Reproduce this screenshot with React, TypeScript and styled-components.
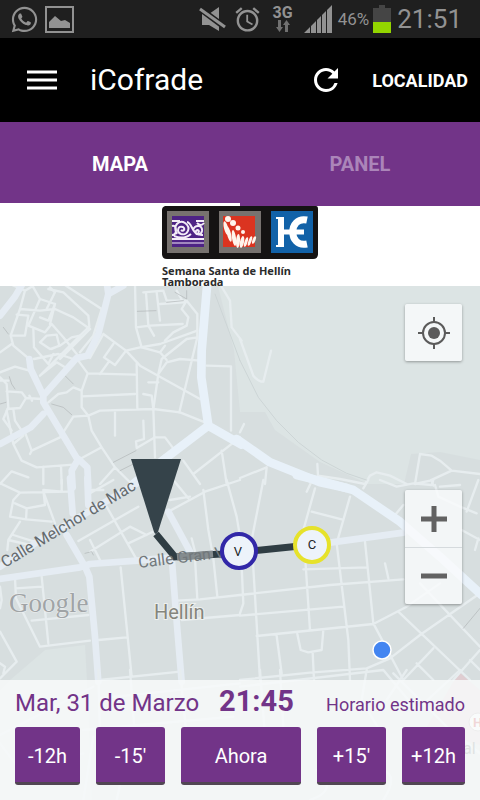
import React, { useState } from "react";
import styled, { createGlobalStyle } from "styled-components";
import { FaWhatsapp } from "react-icons/fa";
import { MdAccessAlarm, MdRefresh } from "react-icons/md";

const PURPLE = "#723488";

const GlobalStyle = createGlobalStyle`
  *, *::before, *::after { box-sizing: border-box; }
  body { margin: 0; background: #ffffff; font-family: Roboto, "Noto Sans", sans-serif; }
  button { font: inherit; border: 0; padding: 0; cursor: pointer; }
`;

const Screen = styled.div`
  display: flex;
  flex-direction: column;
  min-height: 100vh;
`;

const StatusBar = styled.div`
  display: flex;
  align-items: center;
  justify-content: space-between;
  height: 38px;
  padding: 0 18px 0 10px;
  background: #1f1f1f;
  color: #929292;
`;

const StatusGroup = styled.div<{ $gap: number }>`
  display: flex;
  align-items: center;
  gap: ${(p) => p.$gap}px;
  svg { display: block; flex: none; }
`;

const Network = styled.div`
  display: flex;
  flex-direction: column;
  align-items: center;
  font-size: 16px;
  font-weight: 700;
  line-height: 14px;
  margin: 0 5px;
`;

const Percent = styled.span`
  font-size: 17px;
  line-height: 24px;
`;

const Clock = styled.time`
  font-size: 26px;
  line-height: 36px;
`;

const Header = styled.header`
  display: flex;
  align-items: center;
  height: 84px;
  padding: 0 12px 0 20px;
  background: #000000;
  color: #ffffff;
`;

const BarButton = styled.button`
  display: flex;
  align-items: center;
  justify-content: center;
  min-width: 44px;
  height: 48px;
  background: transparent;
  color: #ffffff;
  font-size: 18px;
  font-weight: 700;
`;

const Title = styled.h1`
  flex: 1;
  margin: 0 0 0 26px;
  font-size: 30px;
  font-weight: 400;
  line-height: 40px;
`;

const HeaderActions = styled.div`
  display: flex;
  gap: 24px;
`;

const Tabs = styled.nav`
  display: grid;
  grid-template-columns: 1fr 1fr;
  height: 84px;
`;

const Tab = styled.button<{ $active: boolean }>`
  padding-top: 2px;
  background: ${PURPLE};
  color: ${(p) => (p.$active ? "#ffffff" : "#ab85b9")};
  border-bottom: 3px solid ${(p) => (p.$active ? "#ffffff" : PURPLE)};
  font-size: 20px;
  font-weight: 700;
`;

const Sponsor = styled.section`
  display: flex;
  justify-content: center;
  height: 80px;
  background: #ffffff;
`;

const SponsorMark = styled.figure`
  width: 156px;
  margin: 0;
  svg { display: block; }
`;

const SponsorName = styled.figcaption`
  margin-top: 6px;
  color: #2b2b2b;
  font-family: "Noto Sans", sans-serif;
  font-size: 11px;
  font-weight: 700;
  line-height: 11px;
  white-space: nowrap;
`;

const MapStage = styled.main`
  position: relative;
  display: flex;
  flex: 1;
  flex-direction: column;
  min-height: 480px;
  overflow: hidden;
`;

const MapCanvas = styled.svg`
  position: absolute;
  inset: 0;
  width: 100%;
  height: 100%;
`;

const MapControls = styled.div<{ $top: number }>`
  position: absolute;
  top: ${(p) => p.$top}px;
  right: 18px;
  display: flex;
  flex-direction: column;
  width: 57px;
  border-radius: 2px;
  background: rgba(250, 251, 253, 0.8);
  box-shadow: 0 1px 3px rgba(0, 0, 0, 0.35);
`;

const MapButton = styled.button`
  display: flex;
  align-items: center;
  justify-content: center;
  height: 57px;
  background: transparent;
  & + & { border-top: 1px solid #d5dadd; }
`;

const Panel = styled.section`
  position: relative;
  margin-top: auto;
  padding: 0 15px 15px;
  background: rgba(248, 250, 250, 0.84);
`;

const Schedule = styled.div`
  display: flex;
  align-items: baseline;
  gap: 20px;
  height: 47px;
  color: ${PURPLE};
  line-height: 42px;
  white-space: nowrap;
`;

const DateText = styled.span`
  font-size: 24px;
`;

const TimeText = styled.strong`
  font-size: 29px;
  font-weight: 700;
`;

const Note = styled.span`
  margin-left: auto;
  font-size: 18px;
`;

const Steps = styled.div`
  display: grid;
  grid-template-columns: 65fr 69fr 120fr 69fr 63fr;
  gap: 16px;
`;

const StepButton = styled.button`
  height: 58px;
  padding-top: 2px;
  border-bottom: 3px solid #514653;
  border-radius: 3px;
  background: ${PURPLE};
  color: #ffffff;
  font-size: 20px;
  white-space: nowrap;
`;

const RoadTile = styled.g`
  fill: none;
  stroke: #e7edef;
  stroke-width: 7;
  stroke-linecap: round;
  stroke-linejoin: round;
  .main { stroke: #e5ecf3; stroke-width: 20; }
  .highway { stroke: #e8f1f9; stroke-width: 26; }
  .rail { stroke: #cdd5d6; stroke-width: 3; }
  .path { stroke: #b0b5b6; stroke-width: 2; }
`;

const tile = (x: number, y: number) => `translate(${x} ${y}) scale(0.33333)`;

function CityMap() {
  return (
    <MapCanvas viewBox="0 286 480 514" preserveAspectRatio="xMidYMin slice" role="img" aria-label="Mapa de Hellín">
      <rect y="280" width="480" height="520" fill="#d7dedf" />
      <path d="M218 286H480V460L440 452 411 454 404 484 368 484 320 462 275 430 265 412 240 412 234 350Z" fill="#dce4e4" />
      <path d="M10 680L45 650 85 645 88 700 92 800H0V690Z" fill="#dce4e4" />
      <path d="M459 672L480 690V745L425 730Z" fill="#dfcdd1" />

      <RoadTile transform={tile(0, 284)}>
        <path d="M30 0L75 20 100 5M75 20L60 75 120 80 165 75 220 100 270 135M60 75L32 155 75 155 85 95 50 92M32 155L40 185 88 225M100 10L120 45 85 125 135 145 155 120 190 160 242 225M120 45L165 60 145 110 120 100M145 15L190 25 265 95 268 128 240 155 215 160 180 185 150 195 120 175 140 155 170 152 178 185 155 195M165 60L150 120M150 10L165 25 140 75M190 0L305 75" />
        <path d="M270 135L215 190 180 225M240 155L210 185 120 275M100 135L102 190 145 240M102 225L175 210 220 225M145 240L160 210M120 275L170 235 195 250M0 205L35 180M0 265L45 248 88 260M305 75L280 155 240 205M310 150L378 200 420 245 600 345M378 200L420 190 480 180 592 140M340 180L312 220 345 243 378 200M325 235L300 270M310 150L270 222" />
        <path d="M405 0L408 130 425 190M408 130L450 125 548 120M438 25L445 125 462 155M470 25L480 110M430 25L490 20 500 50 560 50 592 90 592 160 560 165 485 225 475 270 460 375 465 520M480 60L550 55 530 20M560 50L545 75 565 100 560 125 520 145 495 170M425 190L480 205 500 228M480 205L495 185M475 270L500 235 540 225 600 230M575 230L538 385M592 160L575 230" />
        <path d="M235 230L263 268 405 272M410 240L412 372M263 268L245 320 245 370 265 395 300 380 460 375 540 385 615 415M245 337L405 330M245 320L220 310 200 325 175 330 145 355M345 380L345 455M430 330L455 335 460 375M445 295L475 295M265 395L275 440 305 490 345 550 395 600M265 395L220 398 180 460 95 500 75 445M305 490L240 525M95 500L90 510M20 380L40 480 65 530 110 550 220 542M40 480L70 455M430 410L432 465 408 472 410 492 465 460 495 460 525 500M0 600L35 562 85 580M130 548L130 600M183 545L185 600M550 530L600 600M580 570L720 460M665 500L680 600M300 600L345 550" />
        <path d="M0 280L20 300 25 370 10 405 35 440M20 322L65 325 78 342 60 372 22 375M78 342L125 345M88 335L96 350M40 375L45 410 65 440M0 290L25 290M620 245L693 247 693 440" />
        <path d="M660 0L690 50 695 130 725 170" />
        <path className="rail" d="M645 30L690 150 720 230" />
        <path className="path" d="M10 130L25 150M195 275L220 300M155 360L190 370 215 392M340 535L408 500M412 82L468 80M525 25L560 45 560 20M500 55L550 50M28 278L35 300 45 315M0 360L18 355M360 560L400 540" />
        <path className="main" d="M70 -5L45 38 0 95M370 5L325 30 295 150 262 215 230 222 130 335M88 225L92 255 130 335 130 355 235 530M130 390L92 430 0 480M235 525L215 560 218 610M235 525L262 550 265 610M325 30L320 -5" />
        <path className="highway" d="M622 -5L605 200 604 280 625 425 725 482M625 425L500 520 400 600" />
      </RoadTile>

      <RoadTile transform={tile(240, 284)}>
        <path d="M0 165L40 275Q55 293 70 293L93 200M0 445L12 420M0 582L80 550 75 600M232 540L234 575 300 585 375 600 390 575 410 565 450 575 500 600M525 600L540 510 575 515 600 530 635 560 570 590 525 600M635 560L720 570M575 590L580 605" />
        <path className="rail" d="M0 230L55 340 110 410 175 475 245 528 320 568 385 590" />
        <path className="highway" d="M-10 465L90 535 240 595 320 612" />
      </RoadTile>

      <RoadTile transform={tile(0, 480)}>
        <path d="M0 10L60 38 210 35M60 38L40 60 30 110 78 118 80 85 45 70M80 85L135 75 130 30 185 35 185 0M78 118L155 125M130 35L165 130M40 165L120 190M60 125L25 180 22 210M25 180L90 195 120 180M270 40L340 0M270 30L310 30M320 80L408 235M235 183L415 80M270 215L390 140 440 165M270 180L300 240M385 190L470 150M0 320L5 360 0 385M45 295L48 355 120 500 270 482M48 325L125 320M125 290L145 490M95 422L265 405M362 262L395 590M295 480L380 472M300 600L540 575M530 362L600 358 720 345M545 420L720 405M585 235L592 358M640 235L652 350M575 175L590 235M0 455L50 545 0 595M0 550L15 560 10 580M520 0L565 55M680 0L710 110 720 170M505 95L615 35 720 0M610 30L625 150 640 235M510 60L570 50" />
        <path className="main" d="M210 -5L218 100M262 -5L265 75M-5 297L240 262 270 252 410 242 520 232 720 215M200 165L255 260 268 290 285 470 295 605M505 95L570 215M515 230L528 400 545 605" />
        <path className="main" d="M0 260L120 180 240 110 420 5" />
        <path className="path" d="M255 220L275 215 280 225" />
      </RoadTile>

      <RoadTile transform={tile(240, 480)}>
        <path d="M70 0L35 180 60 600M225 25L190 150 210 450M215 95L305 118M200 35L212 10M330 50L290 190 325 480 330 600M375 185L400 430 490 600M190 268L380 262M0 345L270 315 490 298M435 250L445 295M0 407L310 380M50 468L400 432 500 380 600 310M110 468L125 580M172 462L182 510 205 517 245 510 250 450M218 517L222 600M0 600L210 578 380 565 450 535 540 465 720 340M540 310L720 500M475 395L690 600M490 600L580 505M530 550L580 600M640 600L720 510M690 540L720 570M5 260L10 370 0 400M370 25L385 0M465 105L490 75M420 0L470 20 520 10 575 15 580 0M585 15L595 50 660 80 710 100M680 95L715 0M600 20L660 15M665 150L720 180M715 175L705 210" />
        <path className="path" d="M670 445L720 385" />
        <path className="main" d="M270 188L490 158" />
        <path className="highway" d="M170 -15L250 5 340 30 480 125 600 230 725 345" />
      </RoadTile>

      <RoadTile transform={tile(0, 670)}>
        <path d="M295 0L300 200M390 0L405 200M540 0L560 200M300 85L720 40M0 195L280 50M280 200L250 390M0 220L60 300 250 250M250 180L700 140M560 280L720 300M350 390L370 300" />
      </RoadTile>
      <RoadTile transform={tile(240, 670)}>
        <path d="M60 0L75 200M120 0L130 170M0 50L430 0 530 120 660 0M380 0L365 90 430 200M460 10L620 170 720 250M500 0L440 90M230 300Q300 360 210 390M430 390Q500 280 360 300" />
      </RoadTile>

      <g fontFamily="Roboto, sans-serif">
        <text transform="translate(5 568) rotate(-31)" fontSize="16" fill="#656b6e">Calle Melchor de Mac</text>
        <path d="M156 534L175 557 221 554 300 546" fill="none" stroke="#2f3d43" strokeWidth="7" />
        <path d="M177 557L213 554" stroke="#858c8f" strokeWidth="7" />
        <text transform="translate(139 568) rotate(-7)" fontSize="16" fill="#72787b">Calle Gran V</text>
        <path d="M131 459H181L158 532Q156 536 154 532Z" fill="#35434a" />
        <text x="154" y="619" fontSize="20" fill="#85857c" stroke="#edf0ee" strokeWidth="2" paintOrder="stroke">Hellín</text>
        <text x="9" y="612" fontFamily="'Liberation Serif', serif" fontSize="27" fill="#a0a4a6" stroke="#edf0f1" strokeWidth="1" paintOrder="stroke">Google</text>

        <circle cx="239" cy="551" r="17" fill="#edf3fa" stroke="#3228a8" strokeWidth="4" />
        <text x="238" y="556" fontSize="13" fill="#202427" textAnchor="middle">V</text>
        <circle cx="312" cy="545" r="17" fill="#edf3fa" stroke="#e6e22b" strokeWidth="4" />
        <text x="312" y="549" fontSize="13" fill="#202427" textAnchor="middle">C</text>
        <circle cx="382" cy="650" r="9" fill="#4385f1" stroke="#ffffff" strokeWidth="1.5" />

        <circle cx="478" cy="722" r="9" fill="#ffffff" stroke="#b5a5a8" />
        <text x="473" y="727" fontSize="13" fontWeight="700" fill="#c9201f">H</text>
        <text x="463" y="754" fontSize="16" fill="#5b6264">al d</text>
      </g>
    </MapCanvas>
  );
}

function BrandLogo() {
  return (
    <svg width="156" height="53" viewBox="0 0 156 53" role="img" aria-label="Semana Santa de Hellín">
      <path d="M3 0H154Q156 0 156 3V48Q156 53 151 53H5Q0 53 0 48V4Q0 1 3 0Z" fill="#151313" />
      <rect x="5" y="5" width="42" height="42" fill="#77726f" />
      <rect x="10" y="10" width="32" height="31" fill="#4e2385" />
      <g fill="none" stroke="#f3ecf7" strokeWidth="2">
        <path d="M10 15H18M34 15H42M10 33H42" />
        <path d="M10 37H42" strokeWidth="1" />
        <path d="M10 20Q14 19 14 24T10 29M15 28C10 20 17 13 23 17C30 22 25 30 19 28C14 26 16 19 21 21C24 23 21 26 19 24M25 16C31 17 29 30 41 29M31 24C33 18 41 19 40 25C39 30 32 29 34 25C36 23 38 25 36 27M35 17Q39 21 42 17M12 30Q22 34 29 28" />
      </g>
      <rect x="57" y="5" width="42" height="42" fill="#77726f" />
      <rect x="61" y="10" width="32" height="31" fill="#db3420" />
      <g fill="#fff5ed">
        <circle cx="66" cy="13" r="3" />
        <circle cx="71" cy="17" r="3" />
        <circle cx="76" cy="22" r="2.500" />
        <circle cx="81" cy="26" r="2" />
        <ellipse cx="64" cy="22" rx="2" ry="7" transform="rotate(-14 64 22)" />
        <ellipse cx="67" cy="28" rx="2" ry="8" transform="rotate(-14 67 28)" />
        <ellipse cx="72" cy="32" rx="2" ry="8" transform="rotate(-8 72 32)" />
        <ellipse cx="76" cy="35" rx="2" ry="7" transform="rotate(4 76 35)" />
        <ellipse cx="80" cy="36" rx="2" ry="6" transform="rotate(12 80 36)" />
        <ellipse cx="84" cy="36" rx="1.500" ry="5" transform="rotate(18 84 36)" />
        <ellipse cx="88" cy="35" rx="1.500" ry="5" transform="rotate(20 88 35)" />
        <ellipse cx="92" cy="34" rx="1.500" ry="4" transform="rotate(20 92 34)" />
      </g>
      <rect x="109" y="5" width="42" height="42" fill="#1262a8" />
      <g fill="none" stroke="#ffffff">
        <path d="M119 11V41" strokeWidth="6" />
        <path d="M114 12H122M114 40H122" strokeWidth="2" />
        <path d="M120 26H142" strokeWidth="5" />
        <path d="M145 14C126 10 126 42 145 38" strokeWidth="7" />
      </g>
    </svg>
  );
}

const steps = ["-12h", "-15'", "Ahora", "+15'", "+12h"];

export default function App() {
  const [tab, setTab] = useState("MAPA");
  return (
    <Screen>
      <GlobalStyle />
      <StatusBar>
        <StatusGroup $gap={6}>
          <FaWhatsapp size={29} />
          <svg width="29" height="27" viewBox="0 0 29 27" aria-hidden="true">
            <rect x="1" y="1" width="27" height="25" fill="none" stroke="currentColor" strokeWidth="2" />
            <path d="M4 22V16L10 10 16 15 20 14 25 17V22Z" fill="currentColor" />
          </svg>
        </StatusGroup>
        <StatusGroup $gap={6}>
          <svg width="28" height="28" viewBox="0 0 28 28" aria-hidden="true">
            <path d="M3 9H10L20 2V26L10 20H3Z" fill="currentColor" />
            <path d="M0 3L27 23" stroke="#1f1f1f" strokeWidth="6" />
            <path d="M1 4L26 22" stroke="currentColor" strokeWidth="3" />
          </svg>
          <MdAccessAlarm size={29} />
          <Network>
            3G
            <svg width="16" height="12" viewBox="0 0 16 12" aria-hidden="true">
              <path d="M3 0H6V7H8L4.500 12 1 7H3ZM10 12H13V5H15L11.500 0 8 5H10Z" fill="#707070" />
            </svg>
          </Network>
          <svg width="28" height="28" viewBox="0 0 28 28" aria-hidden="true">
            <path d="M0 28L6 22V28ZM7 21L12 16V28H7ZM13 15L17 11V28H13ZM18 10L22 6V28H18ZM23 5L28 0V28H23Z" fill="currentColor" />
          </svg>
          <StatusGroup $gap={4}>
            <Percent>46%</Percent>
            <svg width="18" height="28" viewBox="0 0 18 28" aria-hidden="true">
              <path d="M0 3H6V0H12V3H18V28H0Z" fill="#454545" />
              <rect y="17" width="18" height="11" fill="#93d500" />
            </svg>
          </StatusGroup>
          <Clock>21:51</Clock>
        </StatusGroup>
      </StatusBar>

      <Header>
        <BarButton aria-label="Menú">
          <svg width="32" height="20" viewBox="0 0 32 20">
            <path d="M1 2H31M1 10H31M1 18H31" stroke="currentColor" strokeWidth="3" />
          </svg>
        </BarButton>
        <Title>iCofrade</Title>
        <HeaderActions>
          <BarButton aria-label="Actualizar">
            <MdRefresh size={36} />
          </BarButton>
          <BarButton>LOCALIDAD</BarButton>
        </HeaderActions>
      </Header>

      <Tabs>
        {["MAPA", "PANEL"].map((name) => (
          <Tab key={name} $active={tab === name} onClick={() => setTab(name)}>
            {name}
          </Tab>
        ))}
      </Tabs>

      <Sponsor>
        <SponsorMark>
          <BrandLogo />
          <SponsorName>
            Semana Santa de Hellín
            <br />
            Tamborada
          </SponsorName>
        </SponsorMark>
      </Sponsor>

      <MapStage>
        <CityMap />
        <MapControls $top={18}>
          <MapButton aria-label="Mi ubicación">
            <svg width="32" height="32" viewBox="0 0 32 32" fill="none" stroke="#5b5b5b" strokeWidth="2">
              <circle cx="16" cy="16" r="11" />
              <circle cx="16" cy="16" r="6" fill="#5b5b5b" stroke="none" />
              <path d="M16 0V5M16 27V32M0 16H5M27 16H32" />
            </svg>
          </MapButton>
        </MapControls>
        <MapControls $top={204}>
          <MapButton aria-label="Acercar">
            <svg width="26" height="26" viewBox="0 0 26 26">
              <path d="M13 0V26M0 13H26" stroke="#626262" strokeWidth="5" />
            </svg>
          </MapButton>
          <MapButton aria-label="Alejar">
            <svg width="26" height="26" viewBox="0 0 26 26">
              <path d="M0 13H26" stroke="#626262" strokeWidth="5" />
            </svg>
          </MapButton>
        </MapControls>
        <Panel>
          <Schedule>
            <DateText>Mar, 31 de Marzo</DateText>
            <TimeText>21:45</TimeText>
            <Note>Horario estimado</Note>
          </Schedule>
          <Steps>
            {steps.map((label) => (
              <StepButton key={label}>{label}</StepButton>
            ))}
          </Steps>
        </Panel>
      </MapStage>
    </Screen>
  );
}
